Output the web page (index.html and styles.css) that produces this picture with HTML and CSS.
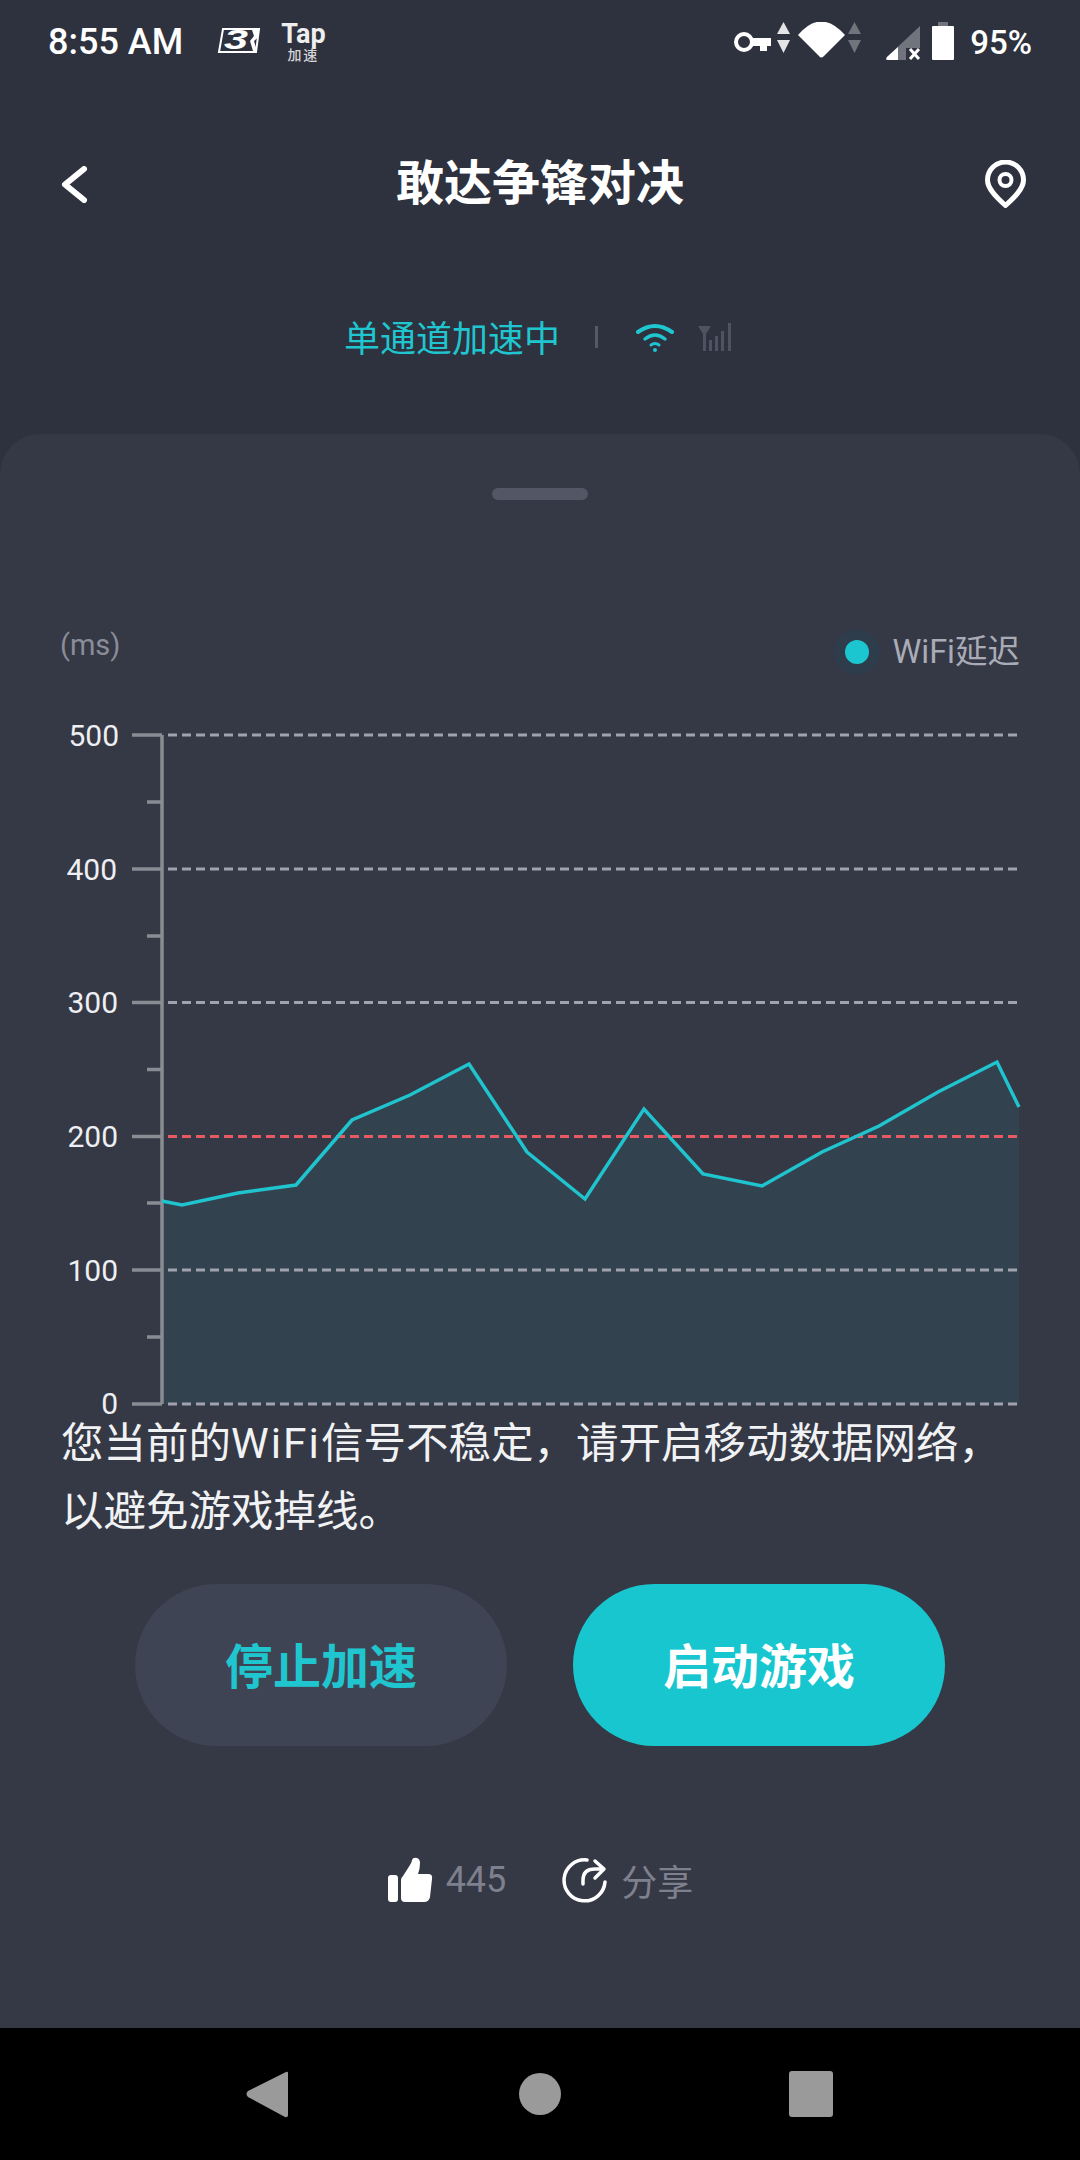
FILE: index.html
```html
<!DOCTYPE html>
<html lang="zh-CN">
<head>
    <meta charset="UTF-8">
    <meta name="viewport" content="width=device-width, initial-scale=1.0">
    <title>敢达争锋对决</title>
    <link rel="stylesheet" href="styles.css">
</head>
<body>
    <div class="page">
        <div class="status-bar">
            <span class="status-time">8:55 AM</span>
            <svg class="logo-3r" viewBox="216 27 42 25">
                <path d="M221 28H257L254 51H217Z" fill="none" stroke="#fff" stroke-width="2"/>
                <path d="M250 29H257L255.500 37L252 40L255 50H251L248 40L252 35Z" fill="#fff"/>
                <text x="222" y="48" class="logo-3r-text" textLength="24" lengthAdjust="spacingAndGlyphs">3</text>
            </svg>
            <div class="logo-tap">
                <span class="logo-tap-name">Tap</span>
                <span class="logo-tap-sub">加速</span>
            </div>
            <div class="status-right">
                <svg class="status-icons" viewBox="735 21 222 40">
                    <!-- key -->
                    <circle cx="745" cy="41" r="8" fill="none" stroke="#fff" stroke-width="4"/>
                    <path d="M753 37H772V45H768V50H761V45H753Z" fill="#fff"/>
                    <path d="M778 33L784.500 21L791 33Z" fill="#e4e4e7"/>
                    <path d="M778 39L784.500 52L791 39Z" fill="#e4e4e7"/>
                    <!-- wifi -->
                    <path d="M799 34Q822 7 846 34L825 55Q822 58 820 55Z" fill="#fff"/>
                    <path d="M849 33L855.500 21L862 33Z" fill="#71737d"/>
                    <path d="M849 39L855.500 52L862 39Z" fill="#71737d"/>
                    <!-- signal -->
                    <path d="M921 25V47H907V59H888Q886 59 888 56Z" fill="#71737d"/>
                    <path d="M888 56L899 46V59H889Q886 59 888 56Z" fill="#fff"/>
                    <path d="M911 48L920 58M920 48L911 58" stroke="#fff" stroke-width="3" fill="none"/>
                    <!-- battery -->
                    <path d="M939 21H949V25H954Q955 25 955 26V58Q955 59 954 59H934Q933 59 933 58V26Q933 25 934 25H939Z" fill="#fff"/>
                    <rect x="939" y="21" width="10" height="4" fill="#71737d"/>
                </svg>
                <span class="status-battery">95%</span>
            </div>
        </div>

        <div class="top-bar">
            <svg class="back-icon" viewBox="0 0 27 37">
                <path d="M23 3L4 18.500L23 34" fill="none" stroke="#fff" stroke-width="6" stroke-linecap="round" stroke-linejoin="round"/>
            </svg>
            <h1 class="top-title">敢达争锋对决</h1>
            <svg class="pin-icon" viewBox="0 0 41 48">
                <path d="M20.500 45.500C12 38 2.500 29 2.500 20A18 18 0 0 1 38.500 20C38.500 29 29 38 20.500 45.500Z" fill="none" stroke="#fff" stroke-width="5" stroke-linejoin="round"/>
                <circle cx="20.500" cy="20" r="6" fill="none" stroke="#fff" stroke-width="4"/>
            </svg>
        </div>

        <div class="channel-row">
            <span class="channel-text">单通道加速中</span>
            <span class="channel-sep"></span>
            <svg class="channel-wifi" viewBox="0 0 38 29">
                <path d="M2 9Q19 -3 36 9" fill="none" stroke="#1fc6cf" stroke-width="4" stroke-linecap="round"/>
                <path d="M9 16Q19 8 29 16" fill="none" stroke="#1fc6cf" stroke-width="3.500" stroke-linecap="round"/>
                <path d="M15 22Q19 19 23 22" fill="none" stroke="#1fc6cf" stroke-width="3" stroke-linecap="round"/>
                <circle cx="19" cy="27" r="2" fill="#1fc6cf"/>
            </svg>
            <svg class="channel-signal" viewBox="0 0 33 28">
                <path d="M0 3H13L8 11V28H5V11Z" fill="#4f5260"/>
                <rect x="11" y="17" width="3" height="11" fill="#4f5260"/>
                <rect x="17" y="13" width="3" height="15" fill="#4f5260"/>
                <rect x="23" y="8" width="3" height="20" fill="#4f5260"/>
                <rect x="30" y="0" width="3" height="28" fill="#4f5260"/>
            </svg>
        </div>

        <div class="sheet">
            <div class="sheet-handle"></div>

            <div class="chart-head">
                <span class="chart-unit">(ms)</span>
                <div class="chart-legend">
                    <span class="legend-dot"></span>
                    <span class="legend-text">WiFi延迟</span>
                </div>
            </div>

            <svg class="chart" viewBox="0 720 1080 689">
                <path class="chart-area" d="M162 1201L182 1205L238 1193L296 1185L352 1120L410 1095L469 1064L527 1152L585 1199L644 1109L703 1174L762 1186L822 1152L879 1126L938 1092L997 1062L1019 1107V1404H162Z"/>

                <line class="chart-grid" x1="168" y1="735" x2="1019" y2="735"/>
                <line class="chart-grid" x1="168" y1="869" x2="1019" y2="869"/>
                <line class="chart-grid" x1="168" y1="1002.500" x2="1019" y2="1002.500"/>
                <line class="chart-grid chart-grid-limit" x1="168" y1="1136.500" x2="1019" y2="1136.500"/>
                <line class="chart-grid" x1="168" y1="1270" x2="1019" y2="1270"/>
                <line class="chart-grid" x1="168" y1="1404" x2="1019" y2="1404"/>

                <path class="chart-axis" d="M162 735V1404M132 735H162M132 869H162M132 1002.500H162M132 1136.500H162M132 1270H162M132 1404H162M147 802H162M147 936H162M147 1069.500H162M147 1203H162M147 1337H162"/>
                <path class="chart-line" d="M162 1201L182 1205L238 1193L296 1185L352 1120L410 1095L469 1064L527 1152L585 1199L644 1109L703 1174L762 1186L822 1152L879 1126L938 1092L997 1062L1019 1107"/>

                <text class="chart-label" x="119" y="746">500</text>
                <text class="chart-label" x="117" y="880">400</text>
                <text class="chart-label" x="118" y="1013">300</text>
                <text class="chart-label" x="118" y="1147">200</text>
                <text class="chart-label" x="118" y="1281">100</text>
                <text class="chart-label" x="118" y="1414">0</text>
            </svg>

            <p class="notice">您当前的<span class="notice-wifi">WiFi</span>信号不稳定，请开启移动数据网络，<br>以避免游戏掉线。</p>

            <div class="actions">
                <button class="action-btn action-stop">停止加速</button>
                <button class="action-btn action-start">启动游戏</button>
            </div>

            <div class="social">
                <svg class="social-like" viewBox="388 1856 46 46">
                    <rect x="389" y="1874" width="10" height="27" rx="3" fill="#fff"/>
                    <path d="M402 1879Q402 1877 404 1875L411 1864Q413 1861 413 1859Q414 1856 418 1857Q421 1858 421 1862Q421 1868 419 1873H429Q434 1873 433 1878L431 1896Q430 1901 425 1901H406Q402 1901 402 1897Z" fill="#fff"/>
                </svg>
                <span class="social-count">445</span>
                <svg class="social-share" viewBox="562 1857 46 46">
                    <path d="M588 1860A20.500 20.500 0 1 0 606 1882" fill="none" stroke="#fff" stroke-width="3.500" stroke-linecap="round"/>
                    <path d="M584 1884V1880Q584 1869 596 1869H604M596 1861L605 1869L596 1878" fill="none" stroke="#fff" stroke-width="3.500" stroke-linecap="round" stroke-linejoin="round"/>
                </svg>
                <span class="social-share-text">分享</span>
            </div>
        </div>

        <div class="nav-bar">
            <svg class="nav-icon" width="42" height="48" viewBox="0 0 42 48">
                <path d="M40 2Q42 1 42 3V45Q42 48 39 47L2 27Q-1 24 2 21Z" fill="#9a9a9a"/>
            </svg>
            <span class="nav-home"></span>
            <span class="nav-recent"></span>
        </div>
    </div>
</body>
</html>
```

FILE: styles.css
```css
* {
    box-sizing: border-box;
}

body {
    margin: 0;
    font-family: Roboto, "Noto Sans CJK SC", sans-serif;
    background-color: #2e313e;
}

.page {
    width: 1080px;
    height: 2160px;
    display: flex;
    flex-direction: column;
    overflow: hidden;
}

/* status bar */
.status-bar {
    height: 84px;
    display: flex;
    align-items: center;
    padding: 0 48px;
    color: #fff;
}

.status-time {
    font-size: 36px;
    font-weight: 500;
    line-height: 84px;
}

.logo-3r {
    width: 42px;
    height: 25px;
    margin-left: 35px;
    margin-bottom: 4px;
    overflow: visible;
}

.logo-3r-text {
    font-family: "Liberation Sans", sans-serif;
    font-size: 28px;
    font-weight: 700;
    font-style: italic;
    fill: #fff;
}

.logo-tap {
    display: flex;
    flex-direction: column;
    align-items: center;
    margin-left: 21px;
}

.logo-tap-name {
    font-size: 27px;
    font-weight: 700;
    line-height: 26px;
    color: #eee;
}

.logo-tap-sub {
    font-size: 14px;
    font-weight: 500;
    line-height: 16px;
    letter-spacing: 2px;
    color: #d5d5d9;
}

.status-right {
    margin-left: auto;
    display: flex;
    align-items: center;
}

.status-icons {
    width: 222px;
    height: 40px;
}

.status-battery {
    margin-left: 14px;
    font-size: 33px;
    font-weight: 500;
}

/* title */
.top-bar {
    height: 78px;
    margin-top: 61px;
    padding: 0 55px;
    display: grid;
    grid-template-columns: 1fr auto 1fr;
    align-items: center;
}

.back-icon {
    width: 27px;
    height: 37px;
    margin-left: 6px;
}

.top-title {
    margin: 0;
    font-size: 48px;
    font-weight: 700;
    line-height: 78px;
    color: #fff;
}

.pin-icon {
    width: 41px;
    height: 48px;
    justify-self: end;
    margin-right: -1px;
}

/* channel state */
.channel-row {
    height: 52px;
    margin-top: 88px;
    padding-right: 5px;
    display: flex;
    align-items: center;
    justify-content: center;
}

.channel-text {
    margin-top: 5px;
    font-size: 36px;
    line-height: 52px;
    color: #1fc6cf;
}

.channel-sep {
    width: 3px;
    height: 22px;
    margin: 0 38px 0 35px;
    background-color: #555866;
}

.channel-wifi {
    width: 38px;
    height: 29px;
}

.channel-signal {
    width: 33px;
    height: 28px;
    margin-left: 24px;
}

/* bottom sheet */
.sheet {
    flex: 1;
    margin-top: 71px;
    padding-top: 54px;
    background-color: #353845;
    border-radius: 40px 40px 0 0;
}

.sheet-handle {
    width: 96px;
    height: 12px;
    margin: 0 auto;
    border-radius: 6px;
    background-color: #535665;
}

.chart-head {
    height: 64px;
    margin-top: 120px;
    padding: 0 60px;
    display: flex;
    align-items: center;
    justify-content: space-between;
}

.chart-unit {
    margin-bottom: 14px;
    font-size: 29px;
    color: #8a8d98;
}

.chart-legend {
    display: flex;
    align-items: center;
}

.legend-dot {
    width: 24px;
    height: 24px;
    margin-right: 23px;
    border-radius: 50%;
    background-color: #1cc6d0;
    box-shadow: 0 0 0 11px #2e3d4c;
}

.legend-text {
    font-size: 32.500px;
    line-height: 44px;
    color: #a9acb6;
}

.chart {
    display: block;
    width: 1080px;
    height: 689px;
    margin-top: 36px;
    overflow: visible;
}

.chart-area {
    fill: #33424f;
}

.chart-grid {
    stroke: #a0a2ad;
    stroke-width: 3;
    stroke-dasharray: 9 5;
}

.chart-grid-limit {
    stroke: #e85a62;
}

.chart-axis {
    fill: none;
    stroke: #8a8c94;
    stroke-width: 3.500;
}

.chart-line {
    fill: none;
    stroke: #1fc4ce;
    stroke-width: 3.500;
}

.chart-label {
    font-size: 30px;
    text-anchor: end;
    fill: #eeeff2;
}

.notice {
    margin: 1px 0 -1px;
    padding: 0 61px;
    font-size: 42.500px;
    line-height: 68px;
    white-space: nowrap;
    color: #f1f2f4;
}

.notice-wifi {
    letter-spacing: 2px;
}

.actions {
    margin-top: 39px;
    display: flex;
    justify-content: center;
    gap: 66px;
}

.action-btn {
    width: 372px;
    height: 162px;
    padding: 0 0 5px;
    border: none;
    border-radius: 81px;
    font-family: inherit;
    font-size: 48px;
    font-weight: 700;
}

.action-stop {
    background-color: #3f4454;
    color: #1fc6cf;
}

.action-start {
    background-color: #17c6cf;
    color: #fff;
}

.social {
    height: 46px;
    margin-top: 111px;
    display: flex;
    align-items: center;
    justify-content: center;
}

.social-like,
.social-share {
    width: 46px;
    height: 46px;
}

.social-count {
    margin: 0 55px 0 13px;
    font-size: 36px;
    color: #7e818d;
}

.social-share-text {
    margin-left: 14px;
    font-size: 36px;
    color: #7e818d;
}

/* android nav */
.nav-bar {
    height: 132px;
    background-color: #000;
    display: flex;
    align-items: center;
    padding: 0 247px 0 246px;
    justify-content: space-between;
}

.nav-icon {
    display: block;
}

.nav-home {
    width: 42px;
    height: 42px;
    margin-left: 3px;
    border-radius: 50%;
    background-color: #9a9a9a;
}

.nav-recent {
    width: 44px;
    height: 46px;
    border-radius: 3px;
    background-color: #9a9a9a;
}
```
